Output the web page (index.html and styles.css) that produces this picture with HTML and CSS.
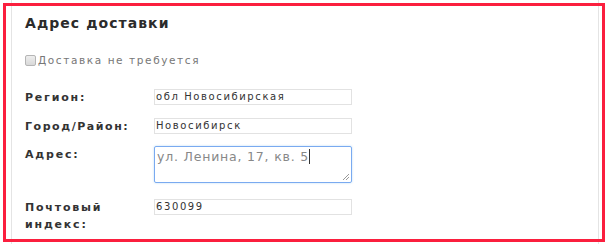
FILE: index.html
```html
<!DOCTYPE html>
<html lang="ru">
<head>
<meta charset="utf-8">
<link rel="stylesheet" href="styles.css">
</head>
<body>
<div class="panel">
  <h2 class="title">Адрес доставки</h2>
  <label class="check"><span class="box"></span>Доставка не требуется</label>
  <div class="row r1">
    <div class="lbl">Регион:</div>
    <div class="inp">обл Новосибирская</div>
  </div>
  <div class="row r2">
    <div class="lbl">Город/Район:</div>
    <div class="inp">Новосибирск</div>
  </div>
  <div class="row r3">
    <div class="lbl">Адрес:</div>
    <div class="area">ул. Ленина, 17, кв. 5<span class="caret"></span>
      <svg class="grip" width="7" height="7" viewBox="0 0 7 7"><path d="M7 1L1 7M7 4L4 7" stroke="#999" stroke-width="1"/></svg>
    </div>
  </div>
  <div class="row r4">
    <div class="lbl">Почтовый<br>индекс:</div>
    <div class="inp">630099</div>
  </div>
</div>
<div class="highlight"></div>
</body>
</html>
```
FILE: styles.css
```css
html, body { margin: 0; padding: 0; background: #fff; }
body { width: 613px; height: 244px; overflow: hidden; position: relative; font-family: "DejaVu Sans", sans-serif; color: #333; }
.panel {
  margin-left: 11px;
  width: 588px;
  height: 244px;
  border-left: 1px solid #e4e4e4;
  border-right: 1px solid #e4e4e4;
  padding: 14px 0 0 13px;
  box-sizing: border-box;
}
.title {
  margin: 0;
  font-size: 14px;
  font-weight: bold;
  letter-spacing: 1.05px;
  line-height: 18px;
  color: #2b2b2b;
}
.check {
  display: flex;
  align-items: center;
  margin-top: 21px;
  height: 14px;
  font-size: 10.5px;
  letter-spacing: 1.6px;
  color: #777;
}
.box {
  width: 9px; height: 9px;
  border: 1px solid #b5b5b5;
  border-radius: 2px;
  background: linear-gradient(#eee, #d8d8d8);
  margin-right: 2px;
}
.row {
  display: grid;
  grid-template-columns: 129px 198px;
  align-items: start;
}
.r1 { margin-top: 22px; }
.r2 { margin-top: 12px; }
.r3 { margin-top: 11px; }
.r4 { margin-top: 16px; }
.lbl {
  font-size: 11px;
  font-weight: bold;
  letter-spacing: 1.8px;
  line-height: 17px;
  color: #333;
}
.r2 .lbl { letter-spacing: 1.55px; }
.inp {
  height: 16px;
  box-sizing: border-box;
  border: 1px solid #e2e2e2;
  padding: 0 0 0 1px;
  font-size: 10px;
  letter-spacing: 1.6px;
  line-height: 14px;
  color: #333;
}
.area {
  position: relative;
  height: 37px;
  box-sizing: border-box;
  border: 1px solid #7aaaf0;
  border-radius: 2px;
  box-shadow: 0 0 2px rgba(102,175,233,.5);
  padding: 2px 0 0 2px;
  font-size: 12.5px;
  letter-spacing: 0.8px;
  line-height: 16px;
  color: #888;
}
.caret { display: inline-block; width: 1px; height: 15px; background: #333; vertical-align: -3px; }
.grip { position: absolute; right: 2px; bottom: 2px; }
.highlight {
  position: absolute;
  left: 3px; top: 3px;
  width: 602px; height: 239px;
  box-sizing: border-box;
  border: 3px solid #fb1f3e;
}
```
